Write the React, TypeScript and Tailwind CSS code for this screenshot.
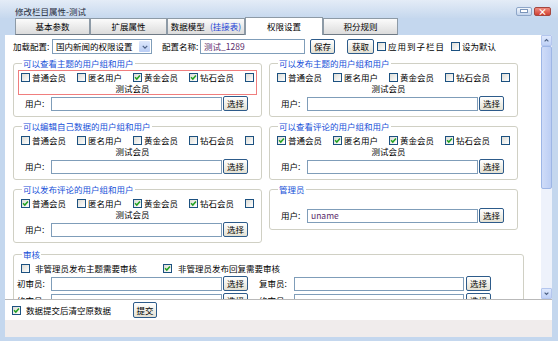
import React from "react";

const members = ["普通会员", "匿名用户", "黄金会员", "钻石会员"];

function Cb({ checked }: { checked?: boolean }) {
  return (
    <span className="flex h-[9px] w-[9px] shrink-0 items-center justify-center border border-[#1c5180] bg-linear-to-br from-[#dcdcd6] to-white">
      {checked && (
        <svg viewBox="0 0 8 8" className="h-[7px] w-[7px]">
          <path d="M1.2 3.8 L3.2 5.8 L6.8 1.8" fill="none" stroke="#21a121" strokeWidth="1.7" />
        </svg>
      )}
    </span>
  );
}

function Btn({ children, className = "" }: { children: React.ReactNode; className?: string }) {
  return (
    <button
      className={
        "flex h-[15px] shrink-0 items-center justify-center whitespace-nowrap rounded-[2px] border border-[#2d5b8a] bg-linear-to-b from-white to-[#e4e1d3] leading-none text-black " +
        className
      }
    >
      {children}
    </button>
  );
}

function TextBox({ w, value, className = "" }: { w: string; value?: string; className?: string }) {
  return (
    <span
      className={
        "flex h-[14px] shrink-0 items-center whitespace-nowrap border border-[#7f9db9] bg-white pl-[3px] leading-none text-[#5a2a6a] " +
        w +
        " " +
        className
      }
    >
      {value}
    </span>
  );
}

function UserRow({ value }: { value?: string }) {
  return (
    <div className="flex h-[15px] items-center whitespace-nowrap pl-[11px]">
      <span className="w-[26px] leading-none">用户:</span>
      <TextBox w="w-[171px]" value={value} />
      <Btn className="ml-[1px] w-[25px]">选择</Btn>
    </div>
  );
}

function Group({ title, checks, highlight }: { title: string; checks: boolean[]; highlight?: boolean }) {
  return (
    <fieldset className="h-[59px] rounded-[3px] border border-[#d0d0c4]">
      <legend className="ml-[8px] whitespace-nowrap px-[1px] leading-[10px] text-[#1650d8]">{title}</legend>
      <div className={"mx-[4px] mt-[2px] border " + (highlight ? "border-[#f07e7e]" : "border-transparent")}>
        <div className="flex h-[12px] items-center justify-center whitespace-nowrap leading-none">
          {members.map((m, i) => (
            <span key={m} className="mr-[11px] flex shrink-0 items-center gap-[2px]">
              <Cb checked={checks[i]} />
              <span className="w-[34px]">{m}</span>
            </span>
          ))}
          <Cb checked={checks[4]} />
        </div>
        <div className="flex h-[11px] items-center justify-center whitespace-nowrap pr-[10px] leading-none">
          测试会员
        </div>
      </div>
      <div className="mt-[1px]">
        <UserRow />
      </div>
    </fieldset>
  );
}

function Tab({ children, w, active }: { children: React.ReactNode; w: string; active?: boolean }) {
  return (
    <div
      className={
        "flex items-center justify-center whitespace-nowrap border border-[#8d9aa6] leading-none " +
        w +
        (active
          ? " h-[18px] border-b-0 bg-white"
          : " h-[17px] border-b-[#6f7a85] bg-linear-to-b from-[#fbfbfb] to-[#dcdcdc]")
      }
    >
      {children}
    </div>
  );
}

export default function App() {
  return (
    <div className="flex h-[341px] w-[558px] flex-col bg-[#c4d7ee] font-['Noto_Sans_CJK_SC',sans-serif] text-[8.5px] text-black">
      {/* 标题栏 */}
      <div className="flex h-[18px] items-center justify-between bg-linear-to-b from-[#e4ecf7] to-[#c6d8ee] pl-[15px] pr-[7px] pt-[4px]">
        <span className="leading-none text-[#1e2a3a]">修改栏目属性-测试</span>
        <div className="flex gap-[2px]">
          <span className="flex h-[9px] w-[16px] items-center justify-center rounded-[2px] border border-[#8ea6c8] bg-linear-to-b from-[#f3f7fc] to-[#c3d4ec]">
            <span className="h-[2px] w-[6px] bg-white shadow-[0_0_0_1px_#7b95ba]" />
          </span>
          <span className="flex h-[9px] w-[17px] items-center justify-center rounded-[2px] border border-[#a4463e] bg-linear-to-b from-[#ef8a7e] to-[#cf3d31] text-[9px] font-bold leading-none text-white">
            ×
          </span>
        </div>
      </div>

      {/* 选项卡 */}
      <div className="flex h-[17px] items-end pl-[15px]">
        <Tab w="w-[75px]">基本参数</Tab>
        <Tab w="w-[77px]">扩展属性</Tab>
        <Tab w="w-[78px]">
          <span className="mr-[5px]">数据模型</span>
          <span className="text-[#1a3fd6]">(挂接表)</span>
        </Tab>
        <Tab w="w-[78px]" active>
          权限设置
        </Tab>
        <Tab w="w-[75px]">积分规则</Tab>
      </div>

      {/* 主体 */}
      <div className="ml-[5px] mr-[6px] flex flex-col bg-white">
        <div className="flex h-[265px] border-b border-[#b9b9b9]">
          <div className="flex-1 overflow-hidden">
            {/* 配置行 */}
            <div className="mt-[4px] flex h-[15px] items-center whitespace-nowrap pl-[8px] leading-none">
              <span className="w-[39px]">加载配置:</span>
              <span className="flex h-[15px] w-[100px] items-center justify-between border border-[#7f9db9] bg-white pl-[3px] pr-[1px]">
                <span>国内新闻的权限设置</span>
                <span className="flex h-[11px] w-[11px] items-center justify-center rounded-[1px] bg-linear-to-b from-[#dfe8fb] to-[#b9cdf5]">
                  <svg viewBox="0 0 8 8" className="h-[6px] w-[6px]">
                    <path d="M1 2.5 L4 5.5 L7 2.5" fill="none" stroke="#4d6185" strokeWidth="1.6" />
                  </svg>
                </span>
              </span>
              <span className="ml-[10px] w-[38px]">配置名称:</span>
              <TextBox w="w-[105px]" value="测试_1289" className="h-[15px]" />
              <Btn className="ml-[5px] w-[25px]">保存</Btn>
              <Btn className="ml-[12px] w-[27px]">获取</Btn>
              <span className="ml-[3px] flex items-center gap-[2px]">
                <Cb />
                <span className="tracking-[1px]">应用到子栏目</span>
              </span>
              <span className="ml-[6px] flex items-center gap-[2px]">
                <Cb />
                设为默认
              </span>
            </div>

            {/* 权限分组 */}
            <div className="mt-[4px] grid grid-cols-[249px_249px] gap-x-[7px] gap-y-[4px] pl-[8px]">
              <Group title="可以查看主题的用户组和用户" checks={[false, false, true, true, false]} highlight />
              <Group title="可以发布主题的用户组和用户" checks={[false, false, false, false, false]} />
              <Group title="可以编辑自己数据的用户组和用户" checks={[false, false, false, false, false]} />
              <Group title="可以查看评论的用户组和用户" checks={[true, true, true, true, false]} />
              <Group title="可以发布评论的用户组和用户" checks={[true, false, true, true, false]} />
              <fieldset className="h-[46px] self-start rounded-[3px] border border-[#d0d0c4]">
                <legend className="ml-[8px] px-[1px] leading-[10px] text-[#1650d8]">管理员</legend>
                <div className="mt-[14px]">
                  <UserRow value="uname" />
                </div>
              </fieldset>
            </div>

            {/* 审核 */}
            <fieldset className="ml-[8px] mt-[6px] w-[511px] rounded-[3px] border border-[#d0d0c4] pb-[6px]">
              <legend className="ml-[8px] px-[1px] leading-[10px] text-[#1650d8]">审核</legend>
              <div className="mt-[3px] flex h-[12px] items-center whitespace-nowrap pl-[7px] leading-none">
                <span className="flex w-[142px] items-center gap-[5px]">
                  <Cb />
                  非管理员发布主题需要审核
                </span>
                <span className="flex items-center gap-[6px]">
                  <Cb checked />
                  非管理员发布回复需要审核
                </span>
              </div>
              {[
                ["初审员:", "复审员:"],
                ["终审员:", "终审员:"],
              ].map(([a, b]) => (
                <div key={a + b} className="mt-[2px] flex h-[15px] items-center whitespace-nowrap pl-[3px] leading-none">
                  <span className="w-[34px]">{a}</span>
                  <TextBox w="w-[171px]" />
                  <Btn className="ml-[1px] w-[25px]">选择</Btn>
                  <span className="ml-[11px] w-[35px]">{b}</span>
                  <TextBox w="w-[170px]" />
                  <Btn className="ml-[2px] w-[25px]">选择</Btn>
                </div>
              ))}
            </fieldset>
          </div>

          {/* 滚动条 */}
          <div className="flex w-[11px] flex-col bg-[#eef2fb]">
            <span className="flex h-[11px] items-center justify-center rounded-[1px] border border-[#b4c6ee] bg-linear-to-b from-[#dfe9fd] to-[#bfd1f7]">
              <svg viewBox="0 0 8 8" className="h-[5px] w-[5px]">
                <path d="M1 5.5 L4 2.5 L7 5.5" fill="none" stroke="#4d6185" strokeWidth="1.8" />
              </svg>
            </span>
            <span className="h-[143px] rounded-[2px] border border-[#9db6e6] bg-linear-to-r from-[#cfdcf8] to-[#bccef4]" />
            <span className="flex-1" />
            <span className="flex h-[11px] items-center justify-center rounded-[1px] border border-[#b4c6ee] bg-linear-to-b from-[#dfe9fd] to-[#bfd1f7]">
              <svg viewBox="0 0 8 8" className="h-[5px] w-[5px]">
                <path d="M1 2.5 L4 5.5 L7 2.5" fill="none" stroke="#4d6185" strokeWidth="1.8" />
              </svg>
            </span>
          </div>
        </div>

        {/* 底部 */}
        <div className="flex h-[20px] items-center whitespace-nowrap pl-[7px] leading-none">
          <Cb checked />
          <span className="ml-[5px] w-[107px]">数据提交后清空原数据</span>
          <Btn className="h-[16px] w-[24px]">提交</Btn>
        </div>
        <div className="h-[17px] bg-[#f0ecec]" />
      </div>
    </div>
  );
}
